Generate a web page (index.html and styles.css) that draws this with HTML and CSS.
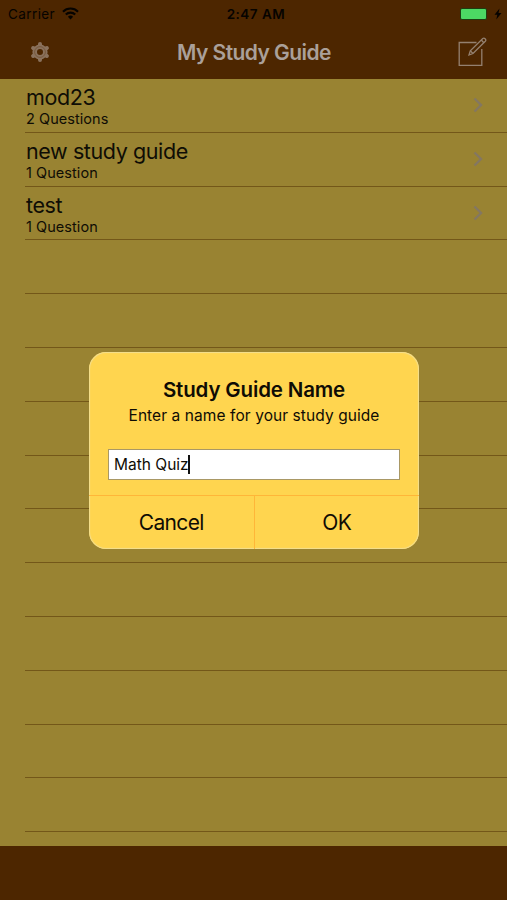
FILE: index.html
```html
<!DOCTYPE html>
<html lang="en">
<head>
    <meta charset="UTF-8">
    <meta name="viewport" content="width=device-width, initial-scale=1.0">
    <title>My Study Guide</title>
    <link rel="stylesheet" href="styles.css">
</head>
<body>
    <div class="header">
        <div class="status-bar">
            <div class="carrier">
                <span>Carrier</span>
                <svg width="17" height="13" viewBox="0 0 17 13" fill="none" stroke="#060300" stroke-width="2.1">
                    <path d="M1 4.7A10.5 10.5 0 0 1 16 4.7"/>
                    <path d="M3.8 7.6A6.6 6.6 0 0 1 13.2 7.6"/>
                    <path d="M8.5 12.4L5.9 9.7A3.7 3.7 0 0 1 11.1 9.7Z" fill="#060300" stroke="none"/>
                </svg>
            </div>
            <div class="time">2:47 AM</div>
            <div class="power">
                <div class="battery"></div>
                <svg width="8" height="12" viewBox="0 0 8 12" fill="#060300">
                    <path d="M5.5 0.5L0.5 6.7H3.3L2.3 11.5L7.5 5H4.5Z"/>
                </svg>
            </div>
        </div>
        <div class="nav-bar">
            <svg class="gear" width="22" height="22" viewBox="0 0 22 22" fill="none" stroke="#8a715c">
                <circle cx="11" cy="11" r="5.3" stroke-width="4.6"/>
                <g stroke-width="4" stroke-linecap="round">
                    <path d="M11 3V5M11 17V19M4.1 7L5.8 8M16.2 14L17.9 15M4.1 15L5.8 14M16.2 8L17.9 7"/>
                </g>
                <circle cx="11" cy="11" r="5.4" stroke="#75563a" stroke-width="0.9"/>
            </svg>
            <h1>My Study Guide</h1>
            <svg class="compose" width="30" height="30" viewBox="0 0 30 30" fill="none" stroke="#94806f" stroke-width="1.3">
                <path d="M19.5 5.5H2.2V28.3H24.8V12"/>
                <path d="M12 18L13.3 13.8L25.8 1.5Q27 0.7 28.3 2Q29.3 3.2 28.3 4.3L16 16.5Z"/>
                <path d="M24.3 3L26.8 5.7M13.3 13.8L16 16.5"/>
            </svg>
        </div>
    </div>
    <div class="list">
        <div class="row">
            <div>
                <div class="name">mod23</div>
                <div class="count">2 Questions</div>
            </div>
            <svg class="arrow" width="10" height="16" viewBox="0 0 10 16"><path d="M1.5 1.5L8 8L1.5 14.5"/></svg>
        </div>
        <div class="row">
            <div>
                <div class="name">new study guide</div>
                <div class="count">1 Question</div>
            </div>
            <svg class="arrow" width="10" height="16" viewBox="0 0 10 16"><path d="M1.5 1.5L8 8L1.5 14.5"/></svg>
        </div>
        <div class="row">
            <div>
                <div class="name">test</div>
                <div class="count">1 Question</div>
            </div>
            <svg class="arrow" width="10" height="16" viewBox="0 0 10 16"><path d="M1.5 1.5L8 8L1.5 14.5"/></svg>
        </div>
        <div class="row"></div>
        <div class="row"></div>
        <div class="row"></div>
        <div class="row"></div>
        <div class="row"></div>
        <div class="row"></div>
        <div class="row"></div>
        <div class="row"></div>
        <div class="row"></div>
        <div class="row"></div>
        <div class="row"></div>
    </div>
    <div class="toolbar"></div>

    <div class="overlay">
        <div class="alert">
            <h2>Study Guide Name</h2>
            <p>Enter a name for your study guide</p>
            <div class="field"><span>Math Quiz</span><i class="caret"></i></div>
            <div class="buttons">
                <button>Cancel</button>
                <button>OK</button>
            </div>
        </div>
    </div>
</body>
</html>
```

FILE: styles.css
```css
body {
    font-family: Inter, sans-serif;
    display: flex;
    flex-direction: column;
    height: 100vh;
    margin: 0;
    background-color: #998332;
    color: #0f0d05;
    overflow: hidden;
}
h1, h2, p {
    margin: 0;
}
svg {
    display: block;
    flex-shrink: 0;
}
.header {
    height: 79px;
    flex-shrink: 0;
    background: #4d2600;
}
.status-bar {
    display: grid;
    grid-template-columns: 1fr auto 1fr;
    align-items: center;
    height: 27px;
    padding: 0 5px 0 8px;
    color: #060300;
    font-size: 13.5px;
}
.carrier {
    display: flex;
    align-items: center;
    gap: 7px;
    letter-spacing: 0.4px;
}
.time {
    margin-left: 2px;
    font-weight: 600;
    letter-spacing: 0.5px;
}
.power {
    display: flex;
    justify-content: flex-end;
    align-items: center;
    gap: 7px;
}
.battery {
    width: 25px;
    height: 10px;
    background: #4cd964;
    border: 1px solid #1f3d10;
    border-radius: 2px;
}
.nav-bar {
    display: flex;
    justify-content: space-between;
    align-items: center;
    height: 51px;
    padding: 0 20px 0 29px;
}
.gear, .compose {
    margin-bottom: 1px;
}
h1 {
    color: #aaa09a;
    font-size: 21px;
    font-weight: 600;
    line-height: 26px;
    letter-spacing: -0.55px;
}
.list {
    flex: 1;
    overflow: hidden;
}
.row {
    display: flex;
    justify-content: space-between;
    box-sizing: border-box;
    height: 53.8px;
    margin-left: 25px;
    padding: 5px 24px 0 1px;
    border-bottom: 1px solid #735719;
}
.name {
    font-size: 21.5px;
    line-height: 26px;
    letter-spacing: -0.4px;
}
.count {
    font-size: 14.5px;
    line-height: 18px;
    letter-spacing: 0.05px;
}
.arrow {
    margin-top: 13px;
    fill: none;
    stroke: #847762;
    stroke-width: 2.4;
}
.toolbar {
    height: 54px;
    flex-shrink: 0;
    background: #4d2600;
}
.overlay {
    position: absolute;
    inset: 0;
    display: flex;
    justify-content: center;
    align-items: center;
}
.alert {
    box-sizing: border-box;
    width: 330px;
    height: 197px;
    display: flex;
    flex-direction: column;
    margin-left: 1px;
    padding-top: 25px;
    border-radius: 17px;
    background: #ffd54f;
    box-shadow: inset 0 0 1px 1px #f3df91;
    text-align: center;
    color: #0f0c04;
}
.alert h2 {
    font-size: 20.5px;
    font-weight: 600;
    line-height: 26px;
    letter-spacing: -0.15px;
}
.alert p {
    font-size: 15.5px;
    line-height: 26px;
    letter-spacing: 0.08px;
}
.field {
    display: flex;
    align-items: center;
    box-sizing: border-box;
    height: 31px;
    margin: 20px 19px 15px;
    padding-left: 5px;
    border: 1px solid #a99865;
    background: #fff;
    font-size: 15.5px;
}
.caret {
    width: 2px;
    height: 19px;
    margin-left: -1px;
    background: #111;
}
.buttons {
    flex: 1;
    display: flex;
    border-top: 1px solid #ffb638;
}
.buttons button {
    flex: 1;
    padding: 1px 0 0;
    border: none;
    background: none;
    color: #0f0c04;
    font-family: inherit;
    font-size: 21px;
    letter-spacing: -0.65px;
}
.buttons button + button {
    border-left: 1px solid #ffb638;
}
```
